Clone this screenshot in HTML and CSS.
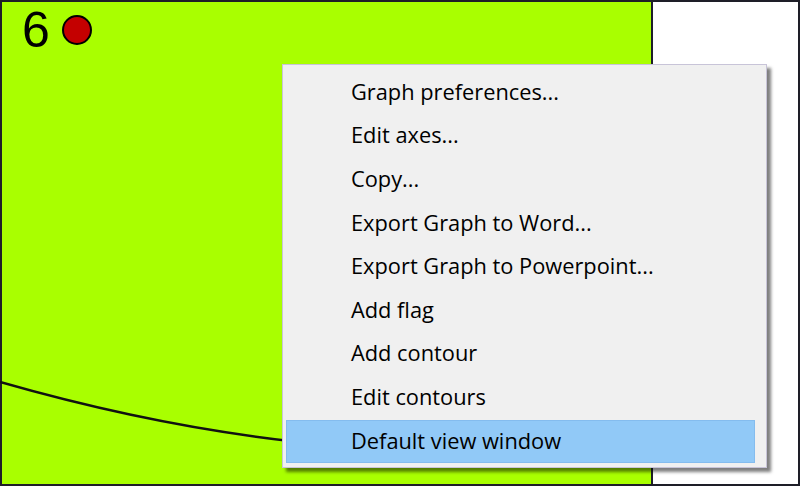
FILE: index.html
```html
<!DOCTYPE html>
<html>
<head>
<meta charset="utf-8">
<link rel="stylesheet" href="styles.css">
</head>
<body>
<div class="frame">
  <div class="plot">
    <div class="label"><span class="num">6</span><span class="dot"></span></div>
    <svg class="curve" width="651" height="484" viewBox="0 0 651 484">
      <path d="M0 382 Q 150 425 290 441" fill="none" stroke="#111" stroke-width="2.5"/>
    </svg>
  </div>
  <div class="side"></div>
  <ul class="menu">
    <li class="item">Graph preferences...</li>
    <li class="item">Edit axes...</li>
    <li class="item">Copy...</li>
    <li class="item">Export Graph to Word...</li>
    <li class="item">Export Graph to Powerpoint...</li>
    <li class="item">Add flag</li>
    <li class="item">Add contour</li>
    <li class="item">Edit contours</li>
    <li class="item active">Default view window</li>
  </ul>
</div>
</body>
</html>
```
FILE: styles.css
```css
html, body { margin: 0; padding: 0; }
body { width: 800px; height: 486px; overflow: hidden; background: #fff; }
.frame {
  position: relative;
  box-sizing: border-box;
  width: 800px; height: 486px;
  border: 2px solid #1e1e28;
  display: flex;
}
.plot {
  position: relative;
  width: 649px;
  background: #a9ff00;
  border-right: 2px solid #1e1e28;
}
.side { flex: 1; background: #fff; }
.label {
  display: flex; align-items: center; gap: 12px;
  padding: 3px 0 0 20px;
}
.num {
  font-family: "Liberation Sans", Arial, sans-serif;
  font-size: 50px; line-height: 50px; color: #000;
}
.dot {
  width: 30px; height: 30px; border-radius: 50%;
  background: #c40000; border: 2px solid #000; box-sizing: border-box;
}
.curve { position: absolute; left: -2px; top: -2px; }
.menu {
  position: absolute; left: 280px; top: 62px;
  box-sizing: border-box;
  width: 485px; height: 404px;
  margin: 0; padding: 6px 11px 4px 3px;
  list-style: none;
  background: #f0f0f0;
  border: 1px solid #c8c4d8;
  box-shadow: 4px 4px 3px rgba(0,0,0,0.5);
}
.item {
  box-sizing: border-box;
  height: 43.6px;
  padding: 0 0 3px 64px;
  display: flex; align-items: center;
  font-family: "Open Sans", "Noto Sans", sans-serif;
  font-size: 21.8px; font-weight: 500; color: #000;
  border: 1px solid transparent;
}
.item.active { background: #91c9f7; border-color: #84bcee; }
```
